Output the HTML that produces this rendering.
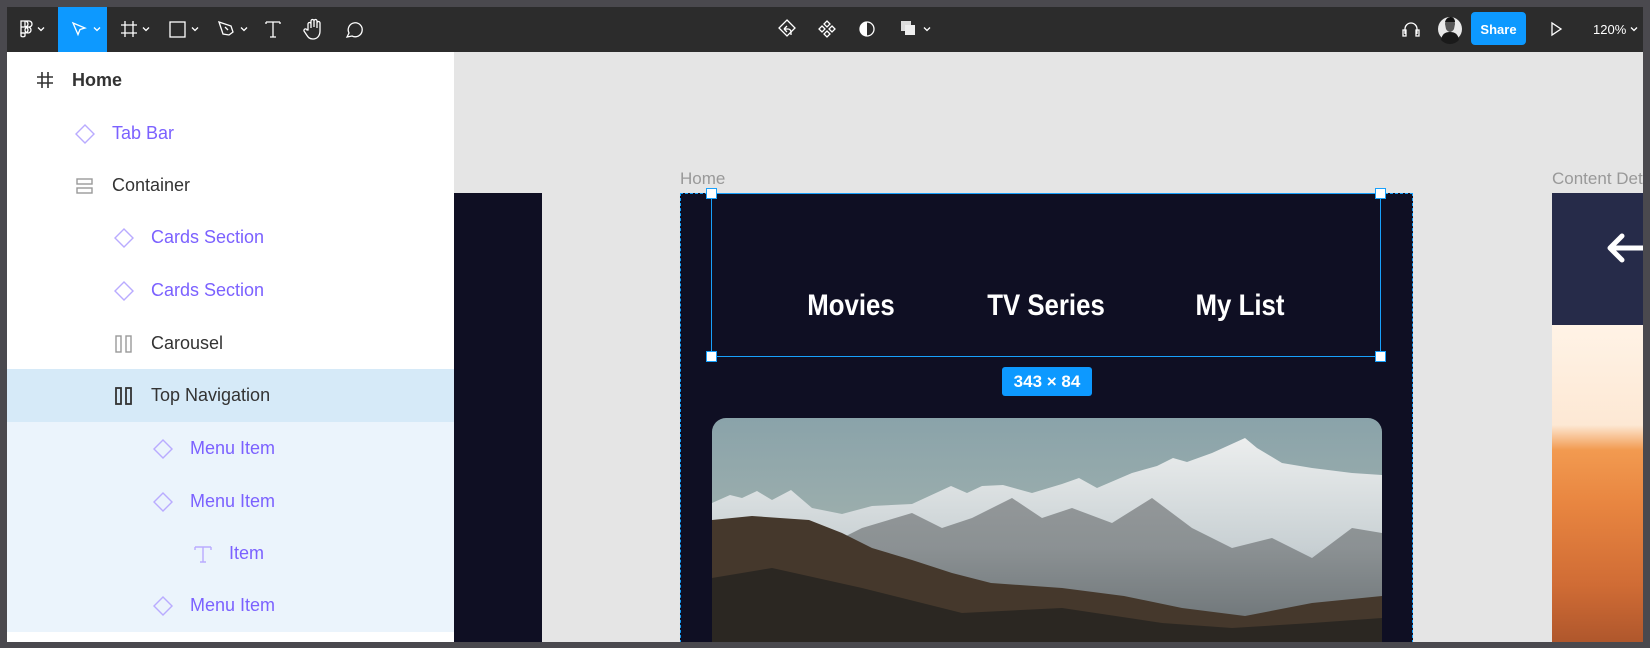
<!DOCTYPE html>
<html><head><meta charset="utf-8"><style>
*{margin:0;padding:0;box-sizing:border-box}
body{width:1650px;height:648px;overflow:hidden;background:#4a494e;position:relative;font-family:"Liberation Sans",sans-serif}
.abs{position:absolute}
#tb{left:7px;top:7px;width:1636px;height:45px;background:#2c2c2c}
#panel{left:7px;top:52px;width:447px;height:590px;background:#fff;overflow:hidden}
#canvas{left:454px;top:52px;width:1189px;height:590px;background:#e5e5e5;overflow:hidden}
.row{position:absolute;left:0;width:447px;height:52px;font-size:18px;color:#333}
.row .t{position:absolute;top:16px}
.row svg{position:absolute;top:17px}
.p{color:#7b61ff}
.nav{position:absolute;color:#fff;font-weight:bold;font-size:30px;transform:translateX(-50%) scaleX(0.86);white-space:nowrap}
.h{position:absolute;width:11px;height:11px;background:#fff;border:1.5px solid #18a0fb}
</style></head><body>
<div id="tb" class="abs"></div>
<svg class="abs" style="left:0;top:0" width="1650" height="52">
 <g fill="none" stroke="#fff" stroke-width="1.3">
  <path d="M21 21h4a3 3 0 0 1 0 6h-4zM21 27h4a3 3 0 0 1 0 6h-4zM25 21h4a3 3 0 0 1 0 6h-4z"/><circle cx="28" cy="30" r="3"/><path d="M21 33h4v3a3 3 0 0 1-4 0z"/>
  <path d="M38 27.5l3 3 3-3"/>
 </g>
 <rect x="58" y="7" width="49" height="45" fill="#0d99ff"/>
 <g fill="none" stroke="#fff" stroke-width="1.3">
  <path d="M73 23l12 5-5 1.5-2 5z"/><path d="M94 27.5l3 3 3-3"/>
  <path d="M125 21v16M133 21v16M121 25h16M121 33h16"/><path d="M143 27.5l3 3 3-3"/>
  <rect x="170" y="22" width="15" height="15"/><path d="M192 27.5l3 3 3-3"/>
  <path d="M219 22l12 4 2 6-4 3-6-1zM225 27l3 3"/><path d="M241 27.5l3 3 3-3"/>
  <path d="M266 22h14M273 22v15M270 37h6M266 22v2M280 22v2"/>
  <path d="M308 30v-6a1.5 1.5 0 0 1 3 0v4-7a1.5 1.5 0 0 1 3 0v6-6a1.5 1.5 0 0 1 3 0v7-5a1.5 1.5 0 0 1 3 0v8c0 5-3 8-7 8s-5-2-7-5l-2-3a1.5 1.5 0 0 1 3-1z"/>
  <path d="M347 37l2-4a7 7 0 1 1 3 3z"/>
  <path d="M787 20l8 8-8 8-8-8z"/><path d="M784 29l3-3M784 29l3 3M784 29h4a3 3 0 0 1 3 3v3"/>
  <path d="M827 21l3 3-3 3-3-3zM827 31l3 3-3 3-3-3zM822 26l3 3-3 3-3-3zM832 26l3 3-3 3-3-3z"/>
  <circle cx="867" cy="29" r="7"/>
  <path d="M924 27.5l3 3 3-3"/>
  <path d="M1405 34v-5a6 6 0 0 1 12 0v5M1403 30h3v6h-3zM1416 30h3v6h-3z"/>
  <path d="M1552 23v12l9-6z"/>
  <path d="M1631 27.5l3 3 3-3"/>
 </g>
 <path d="M867 22a7 7 0 0 0 0 14z" fill="#fff"/>
 <rect x="901" y="21" width="10" height="10" fill="#ddd"/><rect x="905" y="25" width="10" height="10" fill="#eee"/>
 <circle cx="1450" cy="29" r="12" fill="#e8e8e8"/><path d="M1441 40c1-6 4-8 9-8s8 2 9 8a12 12 0 0 1-18 0z" fill="#1a1a1a"/><path d="M1445 24c0-4 3-6 5-6s5 2 5 6l-1 5c-1 2-3 3-4 3s-3-1-4-3z" fill="#555"/><path d="M1445 22c1-4 4-5 6-5s4 2 4 5z" fill="#111"/>
 <rect x="1471" y="12" width="55" height="33" rx="4" fill="#0d99ff"/>
 <text x="1498.5" y="34" fill="#fff" font-size="13" font-weight="bold" text-anchor="middle" font-family="Liberation Sans">Share</text>
 <text x="1593" y="34" fill="#fff" font-size="13" font-family="Liberation Sans">120%</text>
</svg>

<div id="panel" class="abs">
 <div class="abs" style="left:0;top:317px;width:447px;height:53px;background:#d6eaf8"></div>
 <div class="abs" style="left:0;top:370px;width:447px;height:210px;background:#ebf4fc"></div>
 <div class="row" style="top:2px"><svg style="left:28px;top:16px" width="20" height="20" fill="none" stroke="#333" stroke-width="1.6"><path d="M7 2v16M13 2v16M2 7h16M2 13h16"/></svg><span class="t" style="left:65px;font-weight:bold">Home</span></div>
 <div class="row p" style="top:55px"><svg style="left:68px" width="20" height="20" fill="none" stroke="#b9abff" stroke-width="1.4"><path d="M10 1l9 9-9 9-9-9z"/></svg><span class="t" style="left:105px">Tab Bar</span></div>
 <div class="row" style="top:107px"><svg style="left:68px" width="20" height="20" fill="none" stroke="#999" stroke-width="1.4"><rect x="2" y="3" width="15" height="5"/><rect x="2" y="12" width="15" height="5"/></svg><span class="t" style="left:105px">Container</span></div>
 <div class="row p" style="top:159px"><svg style="left:107px" width="20" height="20" fill="none" stroke="#b9abff" stroke-width="1.4"><path d="M10 1l9 9-9 9-9-9z"/></svg><span class="t" style="left:144px">Cards Section</span></div>
 <div class="row p" style="top:212px"><svg style="left:107px" width="20" height="20" fill="none" stroke="#b9abff" stroke-width="1.4"><path d="M10 1l9 9-9 9-9-9z"/></svg><span class="t" style="left:144px">Cards Section</span></div>
 <div class="row" style="top:265px"><svg style="left:107px" width="20" height="20" fill="none" stroke="#999" stroke-width="1.4"><rect x="2" y="2" width="5" height="16"/><rect x="12" y="2" width="5" height="16"/></svg><span class="t" style="left:144px">Carousel</span></div>
 <div class="row" style="top:317px"><svg style="left:107px" width="20" height="20" fill="none" stroke="#333" stroke-width="1.8"><rect x="2" y="2" width="5" height="16"/><rect x="12" y="2" width="5" height="16"/></svg><span class="t" style="left:144px">Top Navigation</span></div>
 <div class="row p" style="top:370px"><svg style="left:146px" width="20" height="20" fill="none" stroke="#b9abff" stroke-width="1.4"><path d="M10 1l9 9-9 9-9-9z"/></svg><span class="t" style="left:183px">Menu Item</span></div>
 <div class="row p" style="top:423px"><svg style="left:146px" width="20" height="20" fill="none" stroke="#b9abff" stroke-width="1.4"><path d="M10 1l9 9-9 9-9-9z"/></svg><span class="t" style="left:183px">Menu Item</span></div>
 <div class="row p" style="top:475px"><svg style="left:186px" width="20" height="20" fill="none" stroke="#b9abff" stroke-width="1.4"><path d="M2 3h16M10 3v15M7 18h6M2 3v3M18 3v3"/></svg><span class="t" style="left:222px">Item</span></div>
 <div class="row p" style="top:527px"><svg style="left:146px" width="20" height="20" fill="none" stroke="#b9abff" stroke-width="1.4"><path d="M10 1l9 9-9 9-9-9z"/></svg><span class="t" style="left:183px">Menu Item</span></div>
</div>

<div id="canvas" class="abs">
 <div class="abs" style="left:0;top:141px;width:88px;height:460px;background:#0f0f23"></div>
 <div class="abs" style="left:226px;top:117px;font-size:17px;color:#999">Home</div>
 <div class="abs" style="left:226px;top:141px;width:733px;height:460px;background:#0f0f23;border:1px dashed #18a0fb;border-bottom:none"></div>
 <div class="abs" style="left:1098px;top:117px;font-size:17px;color:#999;white-space:nowrap">Content Details</div>
 <div class="abs" style="left:1098px;top:141px;width:91px;height:132px;background:#262b49"></div>
 <svg class="abs" style="left:1150px;top:181px" width="39" height="30" fill="none" stroke="#fff" stroke-width="5" stroke-linecap="round" stroke-linejoin="round"><path d="M18 3L6 15l12 12M6 15h33"/></svg>
 <div class="abs" style="left:1098px;top:273px;width:91px;height:330px;background:linear-gradient(180deg,#fff3e6 0,#fde8d4 100px,#f29a50 125px,#e88540 180px,#d06c35 260px,#a8522a 330px)"></div>
 <svg class="abs" style="left:258px;top:366px" width="670" height="240">
  <defs>
   <clipPath id="c"><rect width="670" height="260" rx="14"/></clipPath>
   <linearGradient id="sky" x1="0" y1="0" x2="0" y2="1"><stop offset="0" stop-color="#8aa3aa"/><stop offset=".5" stop-color="#9fb0ad"/><stop offset="1" stop-color="#b3b5ab"/></linearGradient>
   <linearGradient id="snow" x1="0" y1="0" x2="0" y2="1"><stop offset="0" stop-color="#eceeee"/><stop offset=".5" stop-color="#c8d0d3"/><stop offset="1" stop-color="#6f7b80"/></linearGradient>
  </defs>
  <g clip-path="url(#c)">
   <rect width="670" height="240" fill="url(#sky)"/>
   <path d="M0 85L18 77 30 80 45 73 60 82 79 72 100 90 130 96 160 88 200 86 239 68 255 75 270 68 291 67 320 75 350 66 367 60 385 70 420 55 445 48 461 40 475 44 500 35 533 20 545 30 570 45 600 50 640 55 670 57V240H0z" fill="url(#snow)"/>
   <path d="M60 110L110 130 150 110 200 95 230 110 260 100 300 80 330 100 360 90 400 105 440 80 480 110 520 130 560 120 600 140 640 110 670 115V240H60z" fill="#5a5d5e" opacity=".55"/>
   <path d="M0 102L40 98 97 102 130 115 160 130 200 142 240 155 279 165 350 170 412 178 470 190 533 198 600 185 670 178V240H0z" fill="#45382c"/>
   <path d="M0 160L60 150 150 170 250 195 350 190 450 205 520 210 600 205 670 200V240H0z" fill="#2b2722"/>
  </g>
 </svg>
 <div class="abs" style="left:257px;top:141px;width:670px;height:164px;border:1.5px solid #18a0fb"></div>
 <div class="h" style="left:252px;top:136px"></div><div class="h" style="left:921px;top:136px"></div>
 <div class="h" style="left:252px;top:299px"></div><div class="h" style="left:921px;top:299px"></div>
 <div class="nav" style="left:397px;top:237px">Movies</div>
 <div class="nav" style="left:592px;top:237px">TV Series</div>
 <div class="nav" style="left:786px;top:237px">My List</div>
 <div class="abs" style="left:548px;top:315px;width:90px;height:29px;background:#0d99ff;border-radius:3px;color:#fff;font-size:17px;font-weight:bold;text-align:center;line-height:29px">343 × 84</div>
</div>
</body></html>
